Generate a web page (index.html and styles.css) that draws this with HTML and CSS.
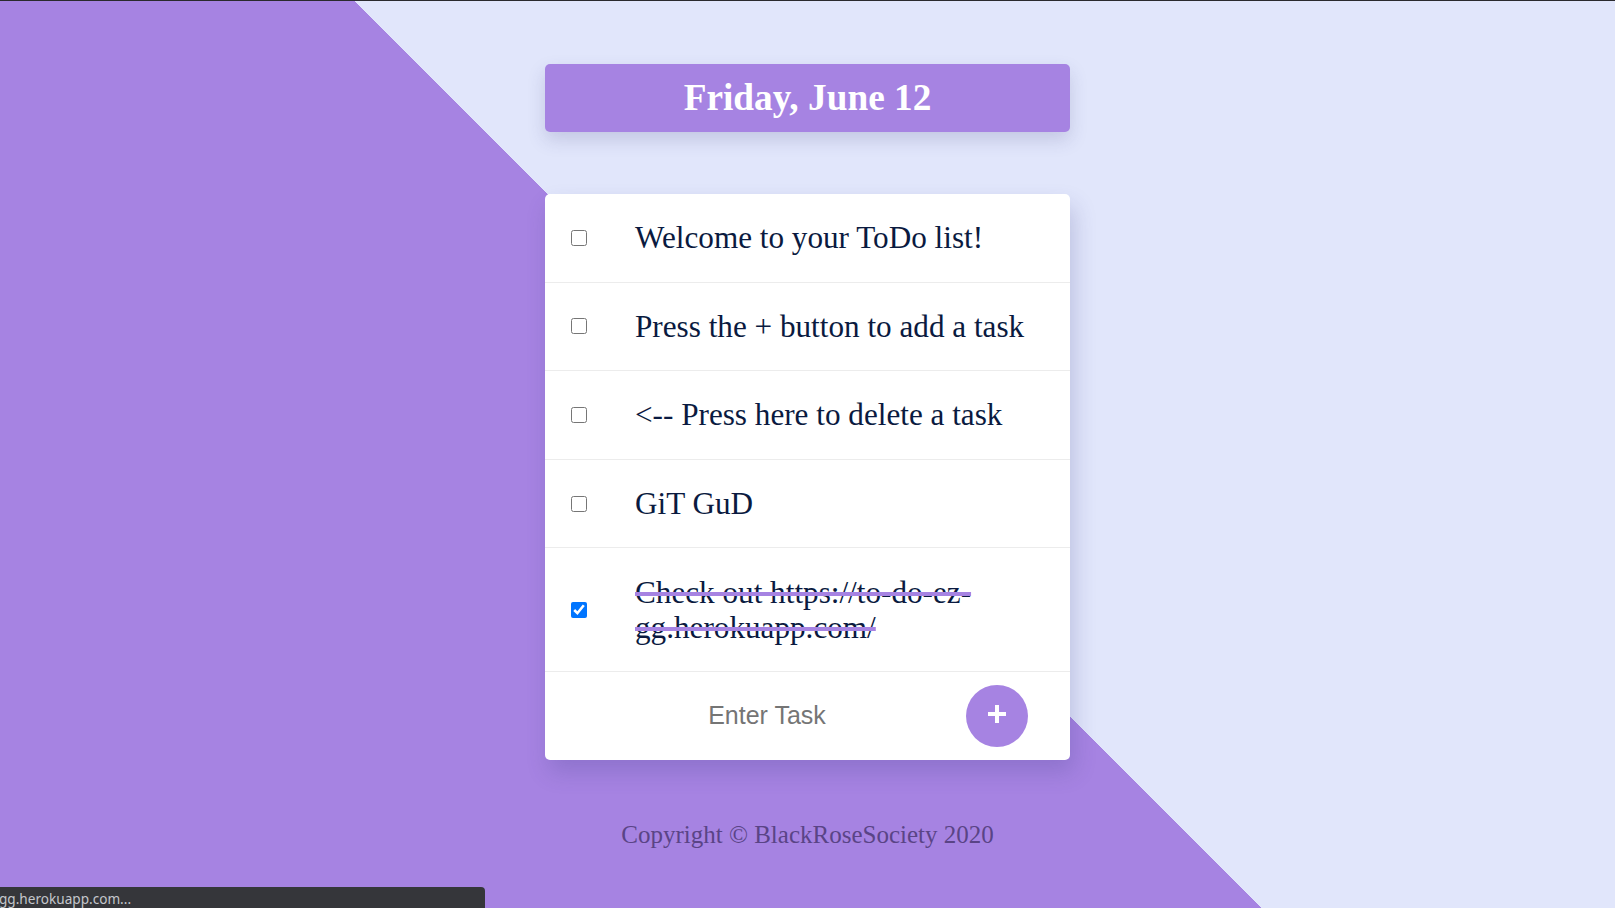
FILE: index.html
```html
<!DOCTYPE html>
<html lang="en">
<head>
<meta charset="utf-8">
<title>ToDo</title>
<link rel="stylesheet" href="styles.css">
</head>
<body>
<div class="page">
  <header class="date-box">
    <h1 class="date-title">Friday, June 12</h1>
  </header>
  <main class="card">
    <ul class="task-list">
      <li class="task"><input type="checkbox" class="task-check"><span class="task-text">Welcome to your ToDo list!</span></li>
      <li class="task"><input type="checkbox" class="task-check"><span class="task-text">Press the + button to add a task</span></li>
      <li class="task"><input type="checkbox" class="task-check"><span class="task-text">&lt;-- Press here to delete a task</span></li>
      <li class="task"><input type="checkbox" class="task-check"><span class="task-text">GiT GuD</span></li>
      <li class="task done"><input type="checkbox" class="task-check" checked><span class="task-text">Check out https://to-do-ez-gg.herokuapp.com/</span></li>
    </ul>
    <form class="add-row">
      <input type="text" class="add-input" placeholder="Enter Task">
      <button type="button" class="add-btn"><svg width="20" height="20" viewBox="0 0 20 20"><path d="M10 1v18M1 10h18" stroke="#fff" stroke-width="4"/></svg></button>
    </form>
  </main>
  <footer class="footer">Copyright © BlackRoseSociety 2020</footer>
</div>
<div class="status">gg.herokuapp.com...</div>
</body>
</html>
```

FILE: styles.css
```css
html, body {
  margin: 0;
  padding: 0;
  height: 100%;
}
body {
  border-top: 1px solid #2a2a2e;
  box-sizing: border-box;
  background: linear-gradient(45deg, #a683e2 50%, #e1e6fb 50%);
  font-family: "Liberation Serif", "Times New Roman", serif;
  overflow: hidden;
}
.page {
  display: flex;
  flex-direction: column;
  align-items: center;
  padding-top: 63px;
}
.date-box {
  width: 525px;
  height: 68px;
  background: #a683e2;
  border-radius: 5px;
  box-shadow: 0 8px 18px rgba(60, 60, 120, 0.18);
  display: flex;
  align-items: center;
  justify-content: center;
}
.date-title {
  margin: 0;
  color: #fff;
  font-size: 37.3px;
  font-weight: bold;
  line-height: 1;
}
.card {
  margin-top: 62px;
  width: 525px;
  background: #fff;
  border-radius: 5px;
  box-shadow: 4px 12px 22px rgba(60, 60, 130, 0.22);
  overflow: hidden;
}
.task-list {
  list-style: none;
  margin: 0;
  padding: 0;
}
.task {
  display: flex;
  align-items: center;
  padding: 26.3px 25px 26.3px 26px;
  border-bottom: 1px solid #ececec;
}
.task-check {
  width: 16px;
  height: 16px;
  margin: 0;
  flex: none;
}
.task-text {
  margin-left: 48px;
  font-size: 31.2px;
  color: #0a1a40;
  line-height: 35px;
}
.done .task-text {
  text-decoration: line-through;
  text-decoration-color: #a683e2;
  text-decoration-thickness: 4px;
}
.add-row {
  display: flex;
  align-items: center;
  padding: 13px 42px 13px 42px;
  margin: 0;
}
.add-input {
  flex: 1;
  min-width: 0;
  border: none;
  outline: none;
  background: transparent;
  text-align: center;
  font-family: "Liberation Sans", Arial, sans-serif;
  font-size: 25px;
  color: #333;
  margin-right: 19px;
  padding: 0;
}
.add-input::placeholder {
  color: #757575;
}
.add-btn {
  width: 62px;
  height: 62px;
  border-radius: 50%;
  border: none;
  background: #a683e2;
  display: flex;
  align-items: center;
  justify-content: center;
  padding: 0 0 3px 0;
  flex: none;
}
.footer {
  margin-top: 61px;
  font-size: 25px;
  color: #5a4486;
  line-height: 28px;
}
.status {
  position: fixed;
  left: 0;
  bottom: 0;
  width: 485px;
  height: 21px;
  background: #35363a;
  border-top-right-radius: 4px;
  color: #c4c7cc;
  font-family: "Noto Sans", "Open Sans", sans-serif;
  font-size: 13.6px;
  line-height: 23px;
  text-indent: -1px;
  white-space: nowrap;
  overflow: hidden;
}
```
